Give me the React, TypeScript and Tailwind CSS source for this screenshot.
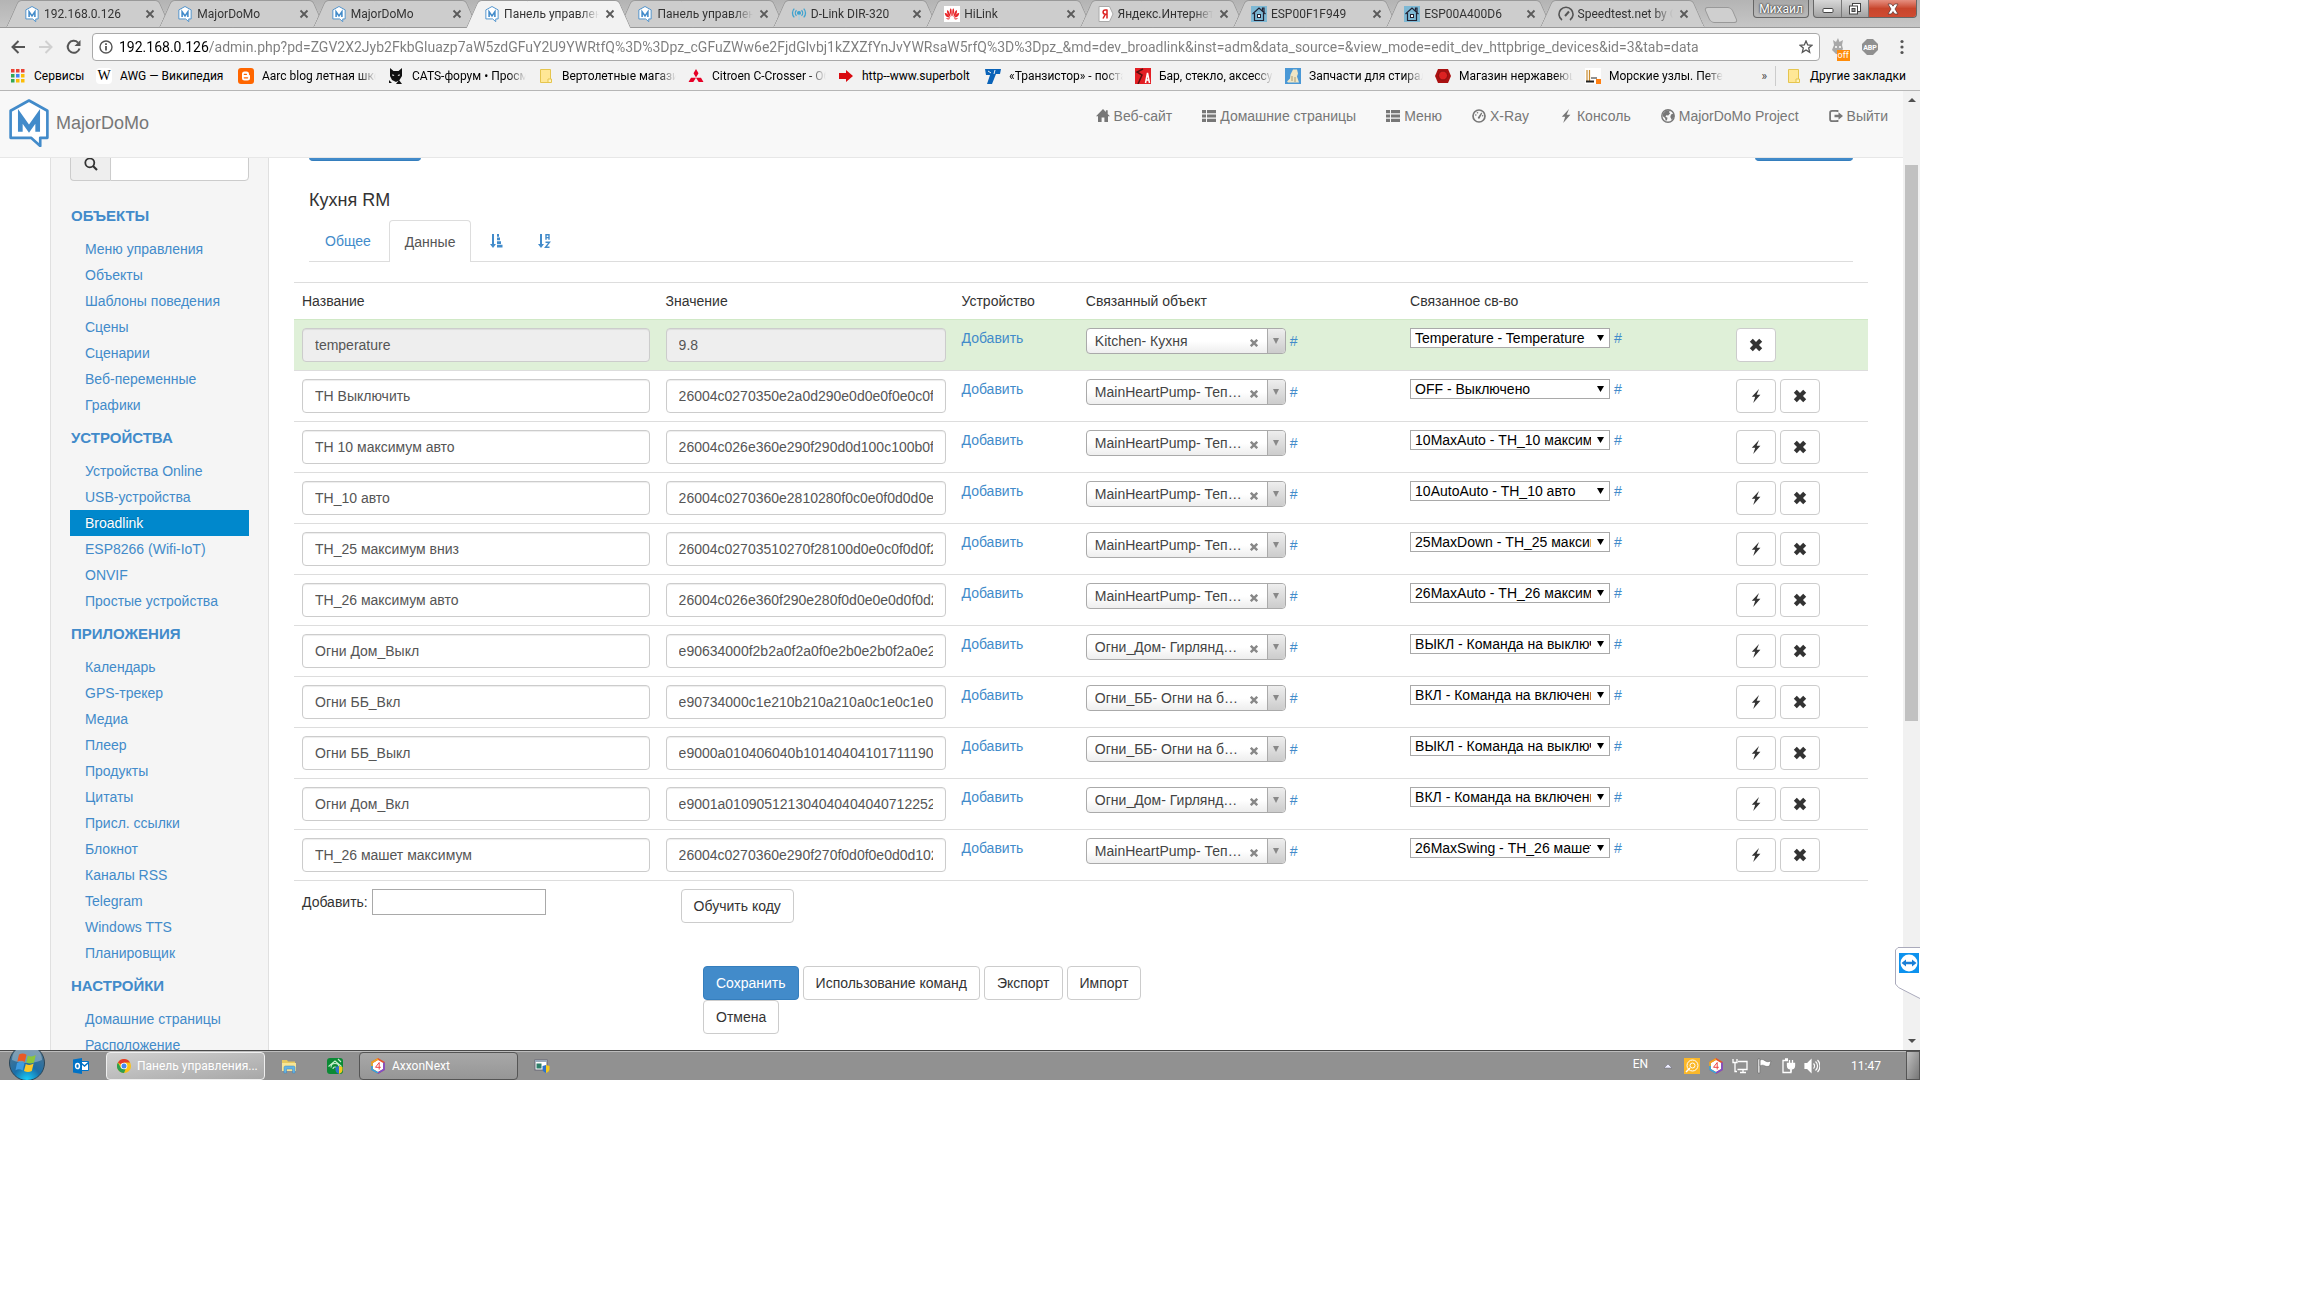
import type { ReactNode } from 'react';
import clsx from 'clsx';

type Row = {
  name: string;
  value: string;
  object: string;
  property: string;
  readOnly?: boolean;
};

const PUMP = 'MainHeartPump- Теп…';
const GARLAND = 'Огни_Дом- Гирлянд…';
const BB = 'Огни_ББ- Огни на б…';
const OFF = 'ВЫКЛ - Команда на выключение';
const ON = 'ВКЛ - Команда на включение';

const ROWS: Row[] = [
  { name: 'temperature', value: '9.8', object: 'Kitchen- Кухня', property: 'Temperature - Temperature', readOnly: true },
  { name: 'ТН Выключить', value: '26004c0270350e2a0d290e0d0e0f0e0c0f0d', object: PUMP, property: 'OFF - Выключено' },
  { name: 'ТН 10 максимум авто', value: '26004c026e360e290f290d0d100c100b0f0d', object: PUMP, property: '10MaxAuto - ТН_10 максимум авто' },
  { name: 'ТН_10 авто', value: '26004c0270360e2810280f0c0e0f0d0d0e0f', object: PUMP, property: '10AutoAuto - ТН_10 авто' },
  { name: 'ТН_25 максимум вниз', value: '26004c02703510270f28100d0e0c0f0d0f29', object: PUMP, property: '25MaxDown - ТН_25 максимум вниз' },
  { name: 'ТН_26 максимум авто', value: '26004c026e360f290e280f0d0e0e0d0f0d28', object: PUMP, property: '26MaxAuto - ТН_26 максимум авто' },
  { name: 'Огни Дом_Выкл', value: 'e90634000f2b2a0f2a0f0e2b0e2b0f2a0e2b', object: GARLAND, property: OFF },
  { name: 'Огни ББ_Вкл', value: 'e90734000c1e210b210a210a0c1e0c1e0c1e', object: BB, property: ON },
  { name: 'Огни ББ_Выкл', value: 'e9000a010406040b10140404101711190404', object: BB, property: OFF },
  { name: 'Огни Дом_Вкл', value: 'e9001a010905121304040404040712252f04', object: GARLAND, property: ON },
  { name: 'ТН_26 машет максимум', value: '26004c0270360e290f270f0d0f0e0d0d1028', object: PUMP, property: '26MaxSwing - ТН_26 машет максимум' },
];

const MENU = [
  {
    title: 'ОБЪЕКТЫ',
    items: ['Меню управления', 'Объекты', 'Шаблоны поведения', 'Сцены', 'Сценарии', 'Веб-переменные', 'Графики'],
  },
  {
    title: 'УСТРОЙСТВА',
    items: ['Устройства Online', 'USB-устройства', 'Broadlink', 'ESP8266 (Wifi-IoT)', 'ONVIF', 'Простые устройства'],
  },
  {
    title: 'ПРИЛОЖЕНИЯ',
    items: ['Календарь', 'GPS-трекер', 'Медиа', 'Плеер', 'Продукты', 'Цитаты', 'Присл. ссылки', 'Блокнот', 'Каналы RSS', 'Telegram', 'Windows TTS', 'Планировщик'],
  },
  { title: 'НАСТРОЙКИ', items: ['Домашние страницы', 'Расположение'] },
];

const URL_TEXT =
  '192.168.0.126/admin.php?pd=ZGV2X2Jyb2FkbGluazp7aW5zdGFuY2U9YWRtfQ%3D%3Dpz_cGFuZWw6e2FjdGlvbj1kZXZfYnJvYWRsaW5rfQ%3D%3Dpz_&md=dev_broadlink&inst=adm&data_source=&view_mode=edit_dev_httpbrige_devices&id=3&tab=data';

/* ---------- icons ---------- */

function HouseLogo({ className }: { className: string }) {
  return (
    <svg className={className} viewBox="0 0 40 47" fill="none">
      <path d="M2 11.5 20 1.5l18 10V38h-7v8l-9-8H2z" fill="#fff" stroke="#428bca" strokeWidth="2.6" strokeLinejoin="round" />
      <path d="M11.5 32V17l8.500 12 8.500-12v15" stroke="#428bca" strokeWidth="4.600" />
    </svg>
  );
}

function DLinkIcon() {
  return (
    <svg className="size-4" viewBox="0 0 16 16" fill="none" stroke="#3fa3cf" strokeWidth="1.3">
      <circle cx="8" cy="7" r="1.4" fill="#3fa3cf" />
      <path d="M5.500 4.200a4 4 0 0 0 0 5.600M10.500 4.200a4 4 0 0 1 0 5.600M3.300 2.600a6.200 6.200 0 0 0 0 8.800M12.700 2.600a6.200 6.200 0 0 1 0 8.800" />
      <path d="M8 8.500V14" stroke="#a9cfe0" />
    </svg>
  );
}

function HuaweiIcon() {
  return (
    <svg className="size-4" viewBox="0 0 16 16">
      <rect width="16" height="16" fill="#fff" />
      <g fill="#e8262a">
        <path d="M7.600 10.500C5.500 7 5.300 3.500 6.800 2.200c.9.8 1.200 4 .8 8.300zM8.400 10.500c2.100-3.500 2.300-7 .8-8.300-.9.8-1.200 4-.8 8.300z" />
        <path d="M6.600 11C3.700 9.300 2.400 6.300 3.200 3.900c1.500.5 3 3.300 3.400 7.100zM9.400 11c2.900-1.700 4.200-4.700 3.400-7.100-1.500.5-3 3.300-3.400 7.100z" />
        <path d="M6.200 11.700C3.300 11.800.9 9.900.8 7c1.600-.2 4 1.600 5.400 4.700zM9.800 11.700c2.900.1 5.300-1.800 5.400-4.700-1.600-.2-4 1.600-5.400 4.700z" />
        <path d="M6.300 12.500c-1.500 1.300-3.300 1.300-4.500-.2zM9.700 12.500c1.500 1.300 3.300 1.300 4.500-.2z" />
      </g>
    </svg>
  );
}

function YandexIcon() {
  return (
    <svg className="size-4" viewBox="0 0 16 16">
      <path d="M1 .5h10.500L15 8l-3.500 7.500H1z" fill="#fff" stroke="#aaa" />
      <path d="M9 3.500v9M9 3.900H7.300a2.200 2.200 0 0 0 0 4.400H9M7.300 8.300 5 12.500" fill="none" stroke="#d22" strokeWidth="1.500" />
    </svg>
  );
}

function EspIcon() {
  return (
    <svg className="size-4" viewBox="0 0 16 16">
      <rect width="16" height="16" fill="#7db8d4" />
      <path d="M1.500 8 8 2l6.500 6M3.500 7v7.500h9V7M11.500 4.500V2h1.500v4" fill="none" stroke="#223" strokeWidth="1.200" />
      <rect x="6.500" y="8.500" width="3" height="3" fill="#fff" stroke="#223" />
    </svg>
  );
}

function GaugeIcon() {
  return (
    <svg className="size-4" viewBox="0 0 16 16" fill="none" stroke="#555" strokeWidth="1.600">
      <path d="M4 14A7 7 0 1 1 12 14" />
      <path d="m7 10 4-4.500" strokeWidth="2" />
    </svg>
  );
}

function FolderIcon() {
  return (
    <svg className="size-4" viewBox="0 0 16 16">
      <path d="M2.500 1.500h10v13h-10z" fill="#ffe796" stroke="#e5c54e" />
      <path d="M10 11h3.500v3.500H10z" fill="#fff3bf" stroke="#e5c54e" />
    </svg>
  );
}

function AppsIcon() {
  const colors = ['#ea4335', '#ea4335', '#ea4335', '#34a853', '#4285f4', '#fbbc05', '#34a853', '#fbbc05', '#fbbc05'];
  return (
    <svg className="size-4" viewBox="0 0 16 16">
      {colors.map((c, i) => (
        <rect key={i} x={1 + (i % 3) * 5} y={1 + Math.floor(i / 3) * 5} width="3.500" height="3.500" fill={c} />
      ))}
    </svg>
  );
}

function WikiIcon() {
  return (
    <span className="flex size-4 items-center justify-center rounded-sm bg-white font-['Liberation_Serif',serif] text-sm leading-none text-black">
      W
    </span>
  );
}

function BloggerIcon() {
  return (
    <svg className="size-4" viewBox="0 0 16 16">
      <rect width="16" height="16" rx="3" fill="#ff6600" />
      <path d="M4 6a2.500 2.500 0 0 1 2.500-2.500h2A2.500 2.500 0 0 1 11 6c0 1 .3 1.300 1 1.300V10A2.500 2.500 0 0 1 9.500 12.500h-3A2.500 2.500 0 0 1 4 10z" fill="#fff" />
      <path d="M6.300 6.300h2.200M6.300 9.800h3.300" stroke="#ff6600" strokeWidth="1.300" strokeLinecap="round" />
    </svg>
  );
}

function CatIcon() {
  return (
    <svg className="size-4" viewBox="0 0 16 16">
      <path d="M2 0l3.500 3h5L14 0v8l-2.500 4L8 14l-4-2L2 8zM1 12l3 3H1zM11 12l3 4h-6z" fill="#111" />
      <path d="M4.500 6l2 1.500-2 .5zM11.500 6l-2 1.500 2 .5z" fill="#fff" />
    </svg>
  );
}

function MitsubishiIcon() {
  return (
    <svg className="size-4" viewBox="0 0 16 16" fill="#e60027">
      <path d="M8 1l2.500 4.300L8 9.600 5.500 5.300zM3 9.800h5l-2.700 4.200H.5zM8 9.800h5l2.500 4.200h-4.800z" />
    </svg>
  );
}

function RedArrowIcon() {
  return (
    <svg className="size-4" viewBox="0 0 16 16">
      <path d="M1 5h7V2l7 6-7 6v-3H1z" fill="#d90a10" />
    </svg>
  );
}

function TransistorIcon() {
  return (
    <svg className="size-4" viewBox="0 0 16 16">
      <path d="M0 1h16l-1 5h-4L7 16H2l3-9H1z" fill="#0a63b8" />
      <path d="M3 3l3 2M10 2l-1 4" stroke="#f2f2f2" />
    </svg>
  );
}

function BarIcon() {
  return (
    <svg className="size-4" viewBox="0 0 16 16">
      <rect width="16" height="16" fill="#e31e24" />
      <path d="M8 1 2 4l5 3-4 9" fill="none" stroke="#5a1010" strokeWidth="1.500" />
      <path d="M10.500 15 12.500 5l2 10M11.200 12h2.600" fill="none" stroke="#fff" strokeWidth="1.500" />
    </svg>
  );
}

function BearIcon() {
  return (
    <svg className="size-4" viewBox="0 0 16 16">
      <rect width="16" height="16" fill="#4a98d6" />
      <path d="M8 1.500h4l1 4-1 3 2 6H3l-1-1 3-3 .5-4z" fill="#efe5c4" />
      <path d="M7 8v5M10 9v5" stroke="#a89b74" />
    </svg>
  );
}

function BoltHeadIcon() {
  return (
    <svg className="size-4" viewBox="0 0 16 16">
      <path d="M3 1h10l3 7-3 7H3L0 8z" fill="#a11" />
      <circle cx="8" cy="7.500" r="4.500" fill="#d22" stroke="#811" />
    </svg>
  );
}

function KnotIcon() {
  return (
    <svg className="size-4" viewBox="0 0 16 16">
      <rect width="16" height="16" fill="#fff" />
      <path d="M2 2v11M4.500 2v11" stroke="#c98b2d" strokeWidth="1.200" />
      <path d="M1 13.500h8" stroke="#222" strokeWidth="2" />
      <path d="M6 10h6" stroke="#222" />
      <rect x="11" y="11" width="5" height="5" fill="#ff7f11" />
    </svg>
  );
}

// 14px bootstrap-like glyphs
function Glyph({ children }: { children: ReactNode }) {
  return (
    <svg className="inline-block size-3.5 shrink-0" viewBox="0 0 14 14" fill="currentColor">
      {children}
    </svg>
  );
}

const HomeGlyph = () => (
  <Glyph>
    <path d="M7 0 0 7.300h2V13h3.600V8.500h2.800V13H12V7.300h2l-2.300-2.400V1.300H9.900v1.800z" />
  </Glyph>
);
const ListGlyph = () => (
  <Glyph>
    <path d="M0 1h4v3.200H0zM5 1h9v3.200H5zM0 5.400h4v3.200H0zM5 5.400h9v3.200H5zM0 9.800h4V13H0zM5 9.800h9V13H5z" />
  </Glyph>
);
const DashGlyph = () => (
  <Glyph>
    <circle cx="7" cy="7" r="6" fill="none" stroke="currentColor" strokeWidth="1.700" />
    <path d="M6 8.200 9.300 3.400l.9.800-2.500 5.100a1 1 0 0 1-1.700-1.100z" />
    <circle cx="3.800" cy="6" r=".8" />
    <circle cx="5.500" cy="3.800" r=".8" />
    <circle cx="10.600" cy="6.800" r=".8" />
  </Glyph>
);
const FlashGlyph = () => (
  <Glyph>
    <path d="M10 0 2.800 7.700h3.400L4.200 14 11.400 5.800H7.700z" />
  </Glyph>
);
const GlobeGlyph = () => (
  <Glyph>
    <circle cx="7" cy="7" r="6.200" fill="none" stroke="currentColor" strokeWidth="1.400" />
    <path d="M2 4.500 5 1.500l4-.3-1 2 1.200 1-2 2.300-2-.3-.7 1.500 2 1-.5 2.300L4.800 12 4 9 1.500 7zM10 5.500l3-1.300.3 3.300-2.500 3.500-1.500-3z" />
  </Glyph>
);
const LogoutGlyph = () => (
  <Glyph>
    <path d="M8.500 3V1.900H3A1.900 1.900 0 0 0 1.100 3.800v6.400A1.900 1.900 0 0 0 3 12.100h5.500V11" fill="none" stroke="currentColor" strokeWidth="1.800" />
    <path d="M9.500 3.300 14 7l-4.500 3.700V8.300H5.500V5.700h4z" />
  </Glyph>
);
const RemoveGlyph = () => (
  <Glyph>
    <path d="M3.800.8 7 4 10.200.8l3 3L10 7l3.200 3.200-3 3L7 10l-3.200 3.200-3-3L4 7 .8 3.800z" />
  </Glyph>
);
const SearchGlyph = () => (
  <Glyph>
    <circle cx="5.800" cy="5.800" r="4.500" fill="none" stroke="currentColor" strokeWidth="1.800" />
    <path d="m9 9 4 4" stroke="currentColor" strokeWidth="2.200" />
  </Glyph>
);
const SortAttrGlyph = () => (
  <Glyph>
    <path d="M3 0h2v10h2l-3 4-3-4h2zM8 0h2v2.700H8zM8 3.600h3v2.700H8zM8 7.200h4v2.700H8zM8 10.800h5.500v2.700H8z" />
  </Glyph>
);
const SortAlphaGlyph = () => (
  <Glyph>
    <path d="M3 0h2v10h2l-3 4-3-4h2z" />
    <path d="M9 5.800V.8h3v5M9 3.600h3M8.500 8.200h4l-4 5h4" fill="none" stroke="currentColor" strokeWidth="1.400" />
  </Glyph>
);

/* ---------- browser chrome ---------- */

const TABS: { title: string; icon: ReactNode; active?: boolean }[] = [
  { title: '192.168.0.126', icon: <HouseLogo className="size-4" /> },
  { title: 'MajorDoMo', icon: <HouseLogo className="size-4" /> },
  { title: 'MajorDoMo', icon: <HouseLogo className="size-4" /> },
  { title: 'Панель управления', icon: <HouseLogo className="size-4" />, active: true },
  { title: 'Панель управления', icon: <HouseLogo className="size-4" /> },
  { title: 'D-Link DIR-320', icon: <DLinkIcon /> },
  { title: 'HiLink', icon: <HuaweiIcon /> },
  { title: 'Яндекс.Интернетометр', icon: <YandexIcon /> },
  { title: 'ESP00F1F949', icon: <EspIcon /> },
  { title: 'ESP00A400D6', icon: <EspIcon /> },
  { title: 'Speedtest.net by Ookla', icon: <GaugeIcon /> },
];

function BrowserTab({ title, icon, active }: { title: string; icon: ReactNode; active?: boolean }) {
  return (
    <div
      className={clsx(
        'relative isolate flex h-full min-w-0 flex-1 items-center pr-2.5 pl-3',
        'before:absolute before:inset-y-0 before:left-0 before:-z-10 before:w-3/5 before:-skew-x-[24deg] before:rounded-tl before:border-t before:border-l before:border-[#999]',
        'after:absolute after:inset-y-0 after:right-0 after:-z-10 after:w-3/5 after:skew-x-[24deg] after:rounded-tr after:border-t after:border-r after:border-[#999]',
        active
          ? 'z-10 before:bg-[#f2f2f2] after:bg-[#f2f2f2]'
          : 'before:border-b before:bg-[#cdcdcd] after:border-b after:bg-[#cdcdcd]',
      )}
    >
      <span className="flex size-4 shrink-0 items-center">{icon}</span>
      <span className="ml-1 min-w-0 flex-1 overflow-hidden whitespace-nowrap text-[#333] [mask-image:linear-gradient(to_right,#000_80%,transparent)]">
        {title}
      </span>
      <button type="button" aria-label="Закрыть вкладку" className="ml-1.5 shrink-0">
        <svg className="size-2.5" viewBox="0 0 10 10" stroke="#5a5a5a" strokeWidth="1.800">
          <path d="m1.500 1.500 7 7M8.500 1.500l-7 7" />
        </svg>
      </button>
    </div>
  );
}

function TabStrip() {
  return (
    <div className="flex h-7 shrink-0 border-b border-[#999] bg-linear-to-b from-[#b4b4b4] to-[#c6c6c6] pl-3">
      <div className="-mb-px flex min-w-0 flex-1">
        {TABS.map((t, i) => (
          <BrowserTab key={i} {...t} />
        ))}
      </div>
      <div className="flex w-[221px] shrink-0 justify-between pr-[3px]">
        <button
          type="button"
          aria-label="Новая вкладка"
          className="mt-[7px] ml-2 h-4 w-7 skew-x-[24deg] rounded-sm border border-[#999] bg-[#cfcfcf]"
        />
        <div className="flex items-start">
          <button
            type="button"
            className="mr-1 h-[18px] w-14 rounded-b border border-t-0 border-[#666] bg-linear-to-b from-[#a8a8a8] to-[#b9b9b9] text-xs leading-4 text-white [text-shadow:0_0_2px_#333,0_0_2px_#333]"
          >
            Михаил
          </button>
          <div className="flex h-[18px] overflow-hidden rounded-b border border-t-0 border-[#666] bg-linear-to-b from-[#d8d8d8] to-[#a3a3a3]">
            <button type="button" aria-label="Свернуть" className="flex w-7 items-center justify-center border-r border-[#777]">
              <svg className="size-3" viewBox="0 0 12 12">
                <rect x="1" y="5.500" width="10" height="4" rx="1" fill="#fff" stroke="#444" />
              </svg>
            </button>
            <button type="button" aria-label="Развернуть" className="flex w-[27px] items-center justify-center border-r border-[#777]">
              <svg className="size-3" viewBox="0 0 12 12" fill="#fff" stroke="#444">
                <rect x="3.500" y=".5" width="8" height="8" />
                <rect x=".5" y="3" width="8" height="8" />
                <rect x="3" y="5.500" width="3" height="3" fill="#999" />
              </svg>
            </button>
            <button type="button" aria-label="Закрыть" className="flex w-[47px] items-center justify-center bg-linear-to-b from-[#e58f80] via-[#c8452c] to-[#cf4b32]">
              <svg className="size-3" viewBox="0 0 12 12">
                <path d="M1 1h3.300L6 3.200 7.700 1H11L8 6l3 5H7.700L6 8.600 4.300 11H1l3-5z" fill="#fff" stroke="#533" strokeWidth=".7" />
              </svg>
            </button>
          </div>
        </div>
      </div>
    </div>
  );
}

function Toolbar() {
  return (
    <div className="flex h-[38px] shrink-0 items-center bg-[#f2f2f2] pr-2.5 pl-2.5">
      <button type="button" aria-label="Назад">
        <svg className="size-4" viewBox="0 0 16 16" fill="none" stroke="#555" strokeWidth="2">
          <path d="M15 8H2.500M8.500 2l-6 6 6 6" />
        </svg>
      </button>
      <button type="button" aria-label="Вперёд" className="ml-3">
        <svg className="size-4" viewBox="0 0 16 16" fill="none" stroke="#d0d0d0" strokeWidth="2">
          <path d="M1 8h12.500M7.500 2l6 6-6 6" />
        </svg>
      </button>
      <button type="button" aria-label="Обновить" className="ml-3">
        <svg className="size-4" viewBox="0 0 16 16" fill="none" stroke="#555" strokeWidth="2">
          <path d="M13.500 9.500A6 6 0 1 1 12 3.600" />
          <path d="M14.500 1v6h-6z" fill="#555" stroke="none" />
        </svg>
      </button>
      <div className="ml-2.5 flex h-7 min-w-0 flex-1 items-center rounded-sm border border-[#a9a9a9] bg-white px-1.5">
        <svg className="size-3.5 shrink-0" viewBox="0 0 14 14" fill="none" stroke="#555" strokeWidth="1.400">
          <circle cx="7" cy="7" r="6" />
          <path d="M7 6v4.500M7 3.300v1.600" strokeWidth="1.800" />
        </svg>
        <input
          aria-label="Адресная строка"
          defaultValue={URL_TEXT}
          className="ml-1.5 min-w-0 flex-1 bg-linear-to-r from-black from-[90px] to-[#7d7d7d] to-[90px] bg-clip-text text-sm leading-5 text-transparent outline-none"
        />
        <button type="button" aria-label="Добавить в закладки">
          <svg className="size-3.5" viewBox="0 0 14 14" fill="none" stroke="#555" strokeWidth="1.300">
            <path d="m7 1 1.700 4 4.300.3-3.300 2.800 1 4.200L7 10l-3.700 2.300 1-4.200L1 5.300 5.300 5z" />
          </svg>
        </button>
      </div>
      <button type="button" aria-label="Frigate" className="relative ml-2">
        <svg className="size-5" viewBox="0 0 20 20">
          <path d="M6 8 5 3l3 2 2-4 1.500 4L15 3l-1 5 1 4-4 5H8l-4-4z" fill="#a8a8a8" />
          <circle cx="8" cy="10" r="1" fill="#fff" />
          <circle cx="12" cy="10" r="1" fill="#fff" />
        </svg>
        <span className="absolute -right-0.5 -bottom-1 bg-[#ff8c0a] px-px text-[9px] leading-[11px] text-white">off</span>
      </button>
      <button type="button" aria-label="Adblock Plus" className="ml-3.5">
        <svg className="size-4" viewBox="0 0 16 16">
          <path d="M5 0h6l5 5v6l-5 5H5l-5-5V5z" fill="#909090" />
          <text x="8" y="10.500" textAnchor="middle" fontSize="7" fontWeight="bold" fill="#fff">ABP</text>
        </svg>
      </button>
      <button type="button" aria-label="Меню браузера" className="ml-4">
        <svg className="size-4" viewBox="0 0 16 16" fill="#555">
          <circle cx="8" cy="2.500" r="1.600" />
          <circle cx="8" cy="8" r="1.600" />
          <circle cx="8" cy="13.500" r="1.600" />
        </svg>
      </button>
    </div>
  );
}

const BOOKMARKS: { title: string; icon: ReactNode; width: string }[] = [
  { title: 'Сервисы', icon: <AppsIcon />, width: 'w-[50px]' },
  { title: 'AWG — Википедия', icon: <WikiIcon />, width: 'w-[106px]' },
  { title: 'Aarc blog летная школа', icon: <BloggerIcon />, width: 'w-[114px]' },
  { title: 'CATS-форум • Просмотр', icon: <CatIcon />, width: 'w-[114px]' },
  { title: 'Вертолетные магазины', icon: <FolderIcon />, width: 'w-[114px]' },
  { title: 'Citroen C-Crosser - Обзор', icon: <MitsubishiIcon />, width: 'w-[114px]' },
  { title: 'http--www.superbolt', icon: <RedArrowIcon />, width: 'w-[111px]' },
  { title: '«Транзистор» - поставка', icon: <TransistorIcon />, width: 'w-[114px]' },
  { title: 'Бар, стекло, аксессуары', icon: <BarIcon />, width: 'w-[114px]' },
  { title: 'Запчасти для стиральных', icon: <BearIcon />, width: 'w-[114px]' },
  { title: 'Магазин нержавеющего', icon: <BoltHeadIcon />, width: 'w-[114px]' },
  { title: 'Морские узлы. Петербург', icon: <KnotIcon />, width: 'w-[114px]' },
];

function BookmarksBar() {
  return (
    <div className="flex h-[25px] shrink-0 items-start border-b border-[#b6b6b6] bg-[#f2f2f2] pr-3.5 pl-2.5">
      <div className="flex min-w-0 flex-1 gap-3 overflow-hidden">
        {BOOKMARKS.map((b) => (
          <a key={b.title} href="#" className="flex shrink-0 items-center gap-2 leading-5 text-black">
            {b.icon}
            <span
              className={clsx(
                'overflow-hidden whitespace-nowrap',
                b.width,
                b.width === 'w-[114px]' && '[mask-image:linear-gradient(to_right,#000_84%,transparent)]',
              )}
            >
              {b.title}
            </span>
          </a>
        ))}
      </div>
      <button type="button" aria-label="Другие закладки" className="mr-2 leading-5 text-[#444]">
        »
      </button>
      <span className="mr-2.5 h-5 border-l border-[#ccc]" />
      <a href="#" className="flex items-center gap-2 leading-5 text-black">
        <FolderIcon />
        Другие закладки
      </a>
    </div>
  );
}

/* ---------- page ---------- */

const NAV = [
  { label: 'Веб-сайт', icon: <HomeGlyph /> },
  { label: 'Домашние страницы', icon: <ListGlyph /> },
  { label: 'Меню', icon: <ListGlyph /> },
  { label: 'X-Ray', icon: <DashGlyph /> },
  { label: 'Консоль', icon: <FlashGlyph /> },
  { label: 'MajorDoMo Project', icon: <GlobeGlyph /> },
  { label: 'Выйти', icon: <LogoutGlyph /> },
];

function SiteHeader() {
  return (
    <header className="relative z-10 flex h-[67px] shrink-0 items-start justify-between border-b border-[#e7e7e7] bg-[#f8f8f8]">
      <a href="#" className="mt-2 ml-2 flex items-center gap-1.5 text-lg text-[#777]">
        <HouseLogo className="h-12 w-[42px]" />
        MajorDoMo
      </a>
      <nav className="mt-[15px] flex">
        {NAV.map((n) => (
          <a key={n.label} href="#" className="flex items-center gap-1 px-[15px] leading-5 text-[#777]">
            {n.icon}
            {n.label}
          </a>
        ))}
      </nav>
    </header>
  );
}

function Sidebar() {
  return (
    <aside className="ml-[50px] w-[219px] shrink-0 border-x border-[#e0e0e0] bg-[#f5f5f5] px-[19px]">
      <div className="mb-[15px] flex h-[34px]">
        <label htmlFor="menu-search" className="flex w-10 items-center justify-center rounded-l border border-r-0 border-[#ccc] bg-[#eee]">
          <SearchGlyph />
        </label>
        <input
          id="menu-search"
          aria-label="Поиск"
          className="min-w-0 flex-1 rounded-r border border-[#ccc] bg-white px-3 shadow-[inset_0_1px_1px_rgba(0,0,0,.075)]"
        />
      </div>
      {MENU.map((group) => (
        <section key={group.title}>
          <h3 className="pl-px leading-10 font-bold text-[#428bca]">
            <a href="#" className="text-[15px]">{group.title}</a>
          </h3>
          <ul>
            {group.items.map((item) => (
              <li key={item}>
                <a
                  href="#"
                  className={clsx(
                    'block pl-[15px] leading-[26px]',
                    item === 'Broadlink'
                      ? 'bg-[#08c] text-white [text-shadow:0_-1px_0_rgba(0,0,0,.2)]'
                      : 'text-[#428bca]',
                  )}
                >
                  {item}
                </a>
              </li>
            ))}
          </ul>
        </section>
      ))}
    </aside>
  );
}

function Button({ children, primary, label }: { children: ReactNode; primary?: boolean; label?: string }) {
  return (
    <button
      type="button"
      aria-label={label}
      className={clsx(
        'inline-flex h-[34px] items-center rounded border px-3 leading-5 whitespace-nowrap',
        primary ? 'border-[#357ebd] bg-[#428bca] text-white' : 'border-[#ccc] bg-white text-[#333]',
      )}
    >
      {children}
    </button>
  );
}

function DataRow({ row }: { row: Row }) {
  const input =
    'h-[34px] w-full rounded border border-[#ccc] px-3 text-[#555] shadow-[inset_0_1px_1px_rgba(0,0,0,.075)]';
  return (
    <tr className={clsx('border-t align-top', row.readOnly ? 'border-[#d0e9c6] bg-[#dff0d8]' : 'border-[#ddd]')}>
      <td className="p-2">
        <input
          aria-label="Название"
          defaultValue={row.name}
          readOnly={row.readOnly}
          className={clsx(input, row.readOnly ? 'bg-[#eee]' : 'bg-white')}
        />
      </td>
      <td className="p-2">
        <input
          aria-label="Значение"
          defaultValue={row.value}
          readOnly={row.readOnly}
          className={clsx(input, row.readOnly ? 'bg-[#eee]' : 'bg-white')}
        />
      </td>
      <td className="p-2 leading-5">
        <a href="#" className="text-[#428bca]">Добавить</a>
      </td>
      <td className="p-2">
        <div className="flex items-center gap-1">
          <div className="relative w-[200px]">
            <select
              aria-label="Связанный объект"
              className="block h-[26px] w-full appearance-none rounded border border-[#aaa] bg-linear-to-b from-white from-50% to-[#eee] pr-11 pl-2 text-[#444]"
            >
              <option>{row.object}</option>
            </select>
            <button type="button" aria-label="Очистить" className="absolute top-[11px] right-7 text-[#888]">
              <svg className="size-2" viewBox="0 0 8 8" stroke="currentColor" strokeWidth="2.400">
                <path d="m.8.8 6.400 6.400M7.200.8.8 7.200" />
              </svg>
            </button>
            <span className="pointer-events-none absolute inset-y-px right-px flex w-[18px] items-center justify-center rounded-r border-l border-[#aaa] bg-linear-to-b from-[#eee] to-[#ccc]">
              <svg className="size-1.5" viewBox="0 0 6 6" fill="#888">
                <path d="M0 0h6L3 6z" />
              </svg>
            </span>
          </div>
          <a href="#" className="leading-5 text-[#428bca]">#</a>
        </div>
      </td>
      <td className="p-2">
        <div className="flex items-center gap-1">
          <div className="relative w-[200px]">
            <select
              aria-label="Связанное св-во"
              className="block h-5 w-full appearance-none border border-[#a9a9a9] bg-white pr-[18px] pl-1 leading-[18px] text-black"
            >
              <option>{row.property}</option>
            </select>
            <svg className="pointer-events-none absolute top-[7px] right-1.5 h-1.5 w-[7px]" viewBox="0 0 7 6">
              <path d="M0 0h7L3.500 6z" />
            </svg>
          </div>
          <a href="#" className="leading-5 text-[#428bca]">#</a>
        </div>
      </td>
      <td className="p-2">
        <div className="flex gap-1">
          {!row.readOnly && (
            <Button label="Отправить">
              <FlashGlyph />
            </Button>
          )}
          <Button label="Удалить">
            <RemoveGlyph />
          </Button>
        </div>
      </td>
    </tr>
  );
}

function DataTable() {
  return (
    <table className="-mx-[15px] mt-5 w-[calc(100%+30px)] table-fixed border-collapse">
      <colgroup>
        <col className="w-[23.1%]" />
        <col className="w-[18.8%]" />
        <col className="w-[7.9%]" />
        <col className="w-[20.6%]" />
        <col className="w-[20.7%]" />
        <col className="w-[8.9%]" />
      </colgroup>
      <thead>
        <tr className="border-t border-[#ddd] text-left">
          {['Название', 'Значение', 'Устройство', 'Связанный объект', 'Связанное св-во'].map((h) => (
            <th key={h} className="p-2 leading-5 font-normal">{h}</th>
          ))}
          <td />
        </tr>
      </thead>
      <tbody>
        {ROWS.map((row) => (
          <DataRow key={row.name} row={row} />
        ))}
        <tr className="border-t border-[#ddd] align-top">
          <td className="p-2">
            <label className="flex items-center gap-1">
              Добавить:
              <input className="h-[26px] w-[174px] border border-[#a9a9a9] bg-white px-1" />
            </label>
          </td>
          <td className="py-2 pl-[23px]" colSpan={5}>
            <Button>Обучить коду</Button>
          </td>
        </tr>
      </tbody>
    </table>
  );
}

function Main() {
  return (
    <main className="ml-10 min-w-0 flex-1 pr-[50px]">
      {/* lower edge of the toolbar that is scrolled under the header */}
      <div className="flex h-3.5 justify-between">
        <span className="w-28 rounded-b border-b border-[#357ebd] bg-[#428bca]" />
        <span className="w-[98px] rounded-b border-b border-[#357ebd] bg-[#428bca]" />
      </div>
      <h2 className="mt-[29px] text-lg leading-5">Кухня RM</h2>
      <ul className="mt-2.5 flex h-[42px] items-stretch border-b border-[#ddd]">
        <li className="flex">
          <a href="#" className="mr-0.5 flex items-center px-4 text-[#428bca]">Общее</a>
        </li>
        <li className="-mb-px flex">
          <a href="#" className="flex items-center rounded-t border border-b-0 border-[#ddd] bg-white px-[15px] text-[#555]">
            Данные
          </a>
        </li>
        <li className="flex">
          <a href="#" aria-label="Сортировать по дате" className="ml-0.5 flex items-center px-4 text-[#428bca]">
            <SortAttrGlyph />
          </a>
        </li>
        <li className="flex">
          <a href="#" aria-label="Сортировать по имени" className="ml-0.5 flex items-center px-4 text-[#428bca]">
            <SortAlphaGlyph />
          </a>
        </li>
      </ul>
      <DataTable />
      <div className="mt-[35px] ml-[394px]">
        <div className="flex gap-1">
          <Button primary>Сохранить</Button>
          <Button>Использование команд</Button>
          <Button>Экспорт</Button>
          <Button>Импорт</Button>
        </div>
        <Button>Отмена</Button>
      </div>
    </main>
  );
}

function Scrollbar() {
  return (
    <div className="flex w-[17px] shrink-0 flex-col items-center bg-[#f1f1f1]">
      <svg className="h-[17px] w-2 shrink-0" viewBox="0 0 8 17" fill="#505050">
        <path d="M0 11h8L4 7z" />
      </svg>
      <div className="mt-[57px] h-[58%] w-[13px] bg-[#c1c1c1]" />
      <svg className="mt-auto h-[17px] w-2 shrink-0" viewBox="0 0 8 17" fill="#505050">
        <path d="M0 6h8l-4 4z" />
      </svg>
    </div>
  );
}

function TeamViewerTab() {
  return (
    <svg className="absolute right-0 bottom-[51px] h-[52px] w-[25px]" viewBox="0 0 25 52">
      <path d="M25 .5H3L.5 3v34l3 3.500L25 51.500z" fill="#fff" />
      <path d="M25 .5H3L.5 3v34l3 3.500L25 51.500" fill="none" stroke="#aab" />
      <rect x="4" y="6" width="20" height="20" fill="#0d92ee" />
      <circle cx="14" cy="16" r="8.500" fill="#fff" />
      <path d="M6.500 16 11 12.500v2.200h6v-2.200l4.500 3.500-4.500 3.500v-2.200h-6v2.200z" fill="#1b7fd6" />
    </svg>
  );
}

/* ---------- taskbar ---------- */

function StartOrb() {
  return (
    <svg className="-mt-1.5 h-9 w-9" viewBox="0 0 36 36">
      <defs>
        <radialGradient id="orb" cx=".5" cy="1" r=".9">
          <stop offset="0" stopColor="#17d4ff" />
          <stop offset=".45" stopColor="#1b6ea8" />
          <stop offset="1" stopColor="#4d7591" />
        </radialGradient>
      </defs>
      <circle cx="18" cy="18" r="17.500" fill="url(#orb)" stroke="#2b4557" />
      <path d="M3 15a15 15 0 0 1 30 0c-8 4-22 4-30 0z" fill="#fff" opacity=".3" />
      <path d="M10 9.500c2.500-1.500 5-1.500 7.500.2L15.800 17c-2.500-1.500-5-1.500-7.500-.2z" fill="#ea5a24" />
      <path d="M18.800 10.500c2.500 1.300 5 1.300 8-.4L25 17.400c-2.500 1.500-5 1.500-7.700.2z" fill="#8cc63c" />
      <path d="M8 18c2.500-1.500 5-1.500 7.500.2l-1.800 7.200c-2.500-1.500-5-1.500-7.200-.2z" fill="#3f9be0" />
      <path d="M16.800 19c2.500 1.300 5 1.300 7.800-.4l-1.800 7.300c-2.500 1.500-5 1.500-7.800.2z" fill="#fdc826" />
    </svg>
  );
}

function OutlookIcon() {
  return (
    <svg className="size-4" viewBox="0 0 16 16">
      <path d="M8 3.500h7.500v9H8z" fill="#fff" stroke="#0072c6" />
      <path d="m8 5 3.500 3L16 4" fill="none" stroke="#0072c6" strokeWidth="1.500" />
      <path d="m0 1.500 9-1.500v16l-9-1.500z" fill="#0072c6" />
      <ellipse cx="4.500" cy="8" rx="1.900" ry="2.600" fill="none" stroke="#fff" strokeWidth="1.500" />
    </svg>
  );
}

function ChromeIcon() {
  return (
    <svg className="size-3.5" viewBox="0 0 14 14">
      <circle cx="7" cy="7" r="7" fill="#fbc116" />
      <path d="M7 7 .9 3.500A7 7 0 0 1 13.100 3.500H7z" fill="#e33b2e" />
      <path d="M7 14A7 7 0 0 1 .9 3.500L4 9l4.500 1.500z" fill="#2e9e4f" />
      <circle cx="7" cy="7" r="3.300" fill="#fff" />
      <circle cx="7" cy="7" r="2.500" fill="#4587f3" />
    </svg>
  );
}

function ExplorerIcon() {
  return (
    <svg className="size-4" viewBox="0 0 16 16">
      <path d="M1 2h5l1 1.500h7V13H1z" fill="#e8c95f" />
      <path d="M1 5h14v8H1z" fill="#f7e596" />
      <path d="M3 15V9.500A1.500 1.500 0 0 1 4.500 8h8A1.500 1.500 0 0 1 14 9.500V15h-2.500v-4h-6v4z" fill="#66b4e3" stroke="#3d87bd" strokeWidth=".5" />
    </svg>
  );
}

function Shield({ x, y }: { x: number; y: number }) {
  return (
    <g transform={`translate(${x} ${y})`}>
      <path d="M3.500 0 7 1v3c0 2-1.500 3-3.500 4z" fill="#f5c91c" />
      <path d="M3.500 0 0 1v3c0 2 1.500 3 3.500 4z" fill="#2f73c9" />
    </g>
  );
}

function GreenIcon() {
  return (
    <svg className="size-4" viewBox="0 0 16 16">
      <rect width="16" height="16" rx="3" fill="#0b8a35" />
      <path d="M1.500 8.500 8 3l6.500 5.500M4 9.500a4 4 0 0 1 8 0M6 11a2 2 0 0 1 4 0M11 1l3 3" fill="none" stroke="#c9f0cf" strokeWidth="1.100" />
      <Shield x={8.5} y={8} />
    </svg>
  );
}

function AxxonIcon() {
  return (
    <svg className="size-4" viewBox="0 0 16 16" fill="none" strokeWidth="1.700">
      <path d="M8 1 14 4.500v7L8 15l-6-3.500v-7z" fill="#fff" stroke="#e5502c" />
      <path d="m14 4.500v7L8 15" stroke="#7a4fd0" />
      <path d="m8 15-6-3.500v-7" stroke="#35a7e0" />
      <path d="M2 8V4.500L8 1" stroke="#f2a51f" />
      <path d="M9.200 11.500v-7L5.500 9.300h5.300" stroke="#e44" strokeWidth="1" />
    </svg>
  );
}

function InstallerIcon() {
  return (
    <svg className="size-4" viewBox="0 0 16 16">
      <rect x="1" y="2" width="12" height="10" fill="#fff" stroke="#667" />
      <path d="M1 3h12" stroke="#9ab" strokeWidth="2" />
      <rect x="2.500" y="5.500" width="5" height="5" fill="#2f7f6a" />
      <Shield x={8.5} y={7} />
    </svg>
  );
}

function TaskButton({ icon, children, active }: { icon: ReactNode; children: ReactNode; active?: boolean }) {
  return (
    <button
      type="button"
      className={clsx(
        'flex h-7 w-[159px] items-center gap-1.5 rounded-sm border pl-2.5 whitespace-nowrap text-white',
        active
          ? 'border-[#eee] bg-linear-to-br from-[#d0d0d0] to-[#a8a8a8]'
          : 'border-[#555] bg-linear-to-b from-[#a8a8a8] to-[#969696]',
      )}
    >
      {icon}
      {children}
    </button>
  );
}

function Taskbar() {
  return (
    <footer className="flex h-[30px] shrink-0 items-center border-t border-[#4a4a4a] bg-[#919191] font-[Roboto,sans-serif] text-xs shadow-[inset_0_1px_0_#bdbdbd]">
      <button type="button" aria-label="Пуск" className="ml-[9px] h-[30px] w-9">
        <StartOrb />
      </button>
      <button type="button" aria-label="Outlook" className="ml-7">
        <OutlookIcon />
      </button>
      <div className="ml-[17px]">
        <TaskButton icon={<ChromeIcon />} active>
          Панель управления...
        </TaskButton>
      </div>
      <button type="button" aria-label="Проводник" className="ml-4">
        <ExplorerIcon />
      </button>
      <button type="button" aria-label="Сервис" className="mr-4 ml-[30px]">
        <GreenIcon />
      </button>
      <TaskButton icon={<AxxonIcon />}>AxxonNext</TaskButton>
      <button type="button" aria-label="Установщик" className="ml-4">
        <InstallerIcon />
      </button>
      <div className="ml-auto flex h-full items-center text-white">
        <span className="mr-4 pb-1">EN</span>
        <svg className="mr-3 size-2" viewBox="0 0 8 8">
          <path d="M0 6h8L4 2z" fill="#eef" stroke="#667" strokeWidth=".5" />
        </svg>
        <div className="flex items-center gap-2">
          <svg className="size-4" viewBox="0 0 16 16" fill="none" stroke="#fff">
            <rect width="16" height="16" fill="#fbb829" stroke="none" />
            <circle cx="8.500" cy="7.500" r="5.500" />
            <circle cx="8.500" cy="7.500" r="2.500" />
            <path d="m2 14 4-4" strokeWidth="1.500" />
          </svg>
          <AxxonIcon />
          <svg className="size-4" viewBox="0 0 16 16" fill="none" stroke="#fff" strokeWidth="1.300">
            <path d="M6 3.500h9v8H5.500M8 14.500h6M11 11.500v3M1 1v3.500h4V1M3 4.500v9h2" />
          </svg>
          <svg className="size-4" viewBox="0 0 16 16" fill="#fff" stroke="#555" strokeWidth=".5">
            <path d="M2 1h1.800v14H2zM4 2c2-.8 3.500-.5 5 .8 1.800 1.200 3.500 1.200 6 .2l-1.500 5c-2 .8-3.500.5-5-.3S5.800 7 4 8z" />
          </svg>
          <svg className="size-4" viewBox="0 0 16 16" fill="none" stroke="#fff" strokeWidth="1.300">
            <path d="M8 2.500H3v12h8V11M5 1h3" />
            <path d="M7.500 5.500h7v2.300a3 3 0 0 1-3 3h-1a3 3 0 0 1-3-3zM9.500 2v3M12.500 2v3M11 11v3" fill="#fff" />
          </svg>
          <svg className="size-4" viewBox="0 0 16 16" fill="none" stroke="#fff" strokeWidth="1.200">
            <path d="M1 5.500h2.500L7 2v12l-3.500-3.500H1z" fill="#fff" />
            <path d="M9.500 5.500a3.500 3.500 0 0 1 0 5M11.500 3.500a6 6 0 0 1 0 9M13.500 2a8.500 8.500 0 0 1 0 12" />
          </svg>
        </div>
        <span className="mr-[25px] ml-[31px]">11:47</span>
        <button
          type="button"
          aria-label="Показать рабочий стол"
          className="h-full w-3.5 border border-[#555] bg-linear-to-br from-[#c0c0c0] to-[#777]"
        />
      </div>
    </footer>
  );
}

export default function App() {
  return (
    <div className="h-screen bg-white">
      <div className="flex h-5/6 w-5/6 flex-col overflow-hidden">
        <div className="shrink-0 font-[Roboto,sans-serif] text-xs">
          <TabStrip />
          <Toolbar />
          <BookmarksBar />
        </div>
        <div className="relative flex min-h-0 flex-1 bg-white font-['Liberation_Sans',Arial,sans-serif] text-sm text-[#333]">
          <div className="flex min-w-0 flex-1 flex-col overflow-hidden">
            <SiteHeader />
            <div className="-mt-[11px] flex min-h-0 flex-1">
              <Sidebar />
              <Main />
            </div>
          </div>
          <Scrollbar />
          <TeamViewerTab />
        </div>
        <Taskbar />
      </div>
    </div>
  );
}
